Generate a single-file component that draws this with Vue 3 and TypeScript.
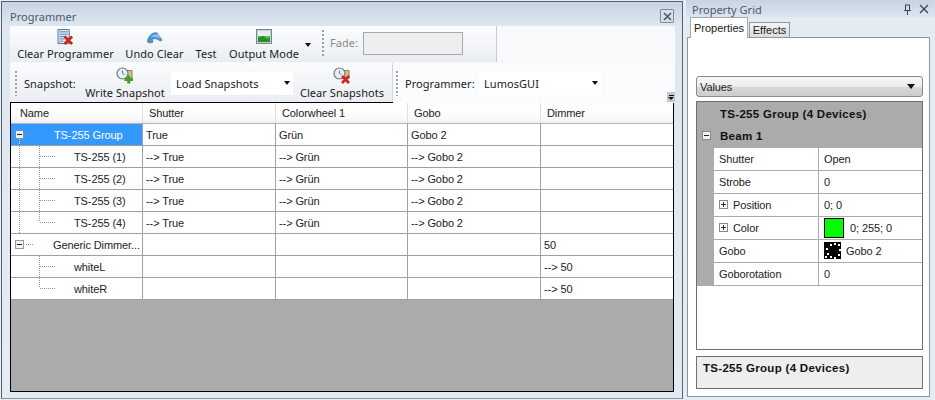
<script setup lang="ts">
interface Row { name: string; kind: 'group' | 'child' | 'last' | 'dim' | 'dimchild' | 'dimlast'; sel?: boolean; cells: string[] }
const columns = ['Name', 'Shutter', 'Colorwheel 1', 'Gobo', 'Dimmer']
const rows: Row[] = [
  { name: 'TS-255 Group', kind: 'group', sel: true, cells: ['True', 'Grün', 'Gobo 2', ''] },
  { name: 'TS-255 (1)', kind: 'child', cells: ['--> True', '--> Grün', '--> Gobo 2', ''] },
  { name: 'TS-255 (2)', kind: 'child', cells: ['--> True', '--> Grün', '--> Gobo 2', ''] },
  { name: 'TS-255 (3)', kind: 'child', cells: ['--> True', '--> Grün', '--> Gobo 2', ''] },
  { name: 'TS-255 (4)', kind: 'last', cells: ['--> True', '--> Grün', '--> Gobo 2', ''] },
  { name: 'Generic Dimmer...', kind: 'dim', cells: ['', '', '', '50'] },
  { name: 'whiteL', kind: 'dimchild', cells: ['', '', '', '--> 50'] },
  { name: 'whiteR', kind: 'dimlast', cells: ['', '', '', '--> 50'] }
]
const isTop = (r: Row) => r.kind === 'group' || r.kind === 'dim'
const goboDots = [[2, 6], [6, 2], [10, 1], [14, 2], [3, 11], [1, 14], [6, 14], [10, 15], [14, 12], [15, 7]]
</script>

<template>
  <div class="screen">
    <section class="programmer">
      <header class="win-title">
        <span>Programmer</span>
        <span class="close-box">
          <svg width="9" height="9" viewBox="0 0 9 9"><path d="M1 1l7 7M8 1L1 8" stroke="#4a5560" stroke-width="1.6" /></svg>
        </span>
      </header>
      <div class="toolbars">
        <div class="strip one">
          <button class="tool clear-prog">
            <svg width="17" height="17" viewBox="0 0 17 17">
              <path d="M.5 .5h12v15H.5z" fill="#d8e4f0" stroke="#4f6f8f" />
              <path d="M2 3h9M2 5.500h9M2 8h6M2 10.500h5M2 13h4" stroke="#5f86ad" />
              <path d="M7.500 8l8 8M15.500 8l-8 8" stroke="#c8261f" stroke-width="3" />
            </svg>
            <span>Clear Programmer</span>
          </button>
          <button class="tool undo">
            <svg width="18" height="17" viewBox="0 0 18 17">
              <path d="M1 14C1 8 6 3 11 4l5 7c1 2-1 2-3 1-2-2-5-2-7-1l1 3-3 1z" fill="#4f94cf" stroke="#2f6ca6" stroke-width=".6" />
              <path d="M5 8c3-2 6-3 8-2l2 4c-3-1-6-2-10-1z" fill="#8cc0e8" />
            </svg>
            <span>Undo Clear</span>
          </button>
          <button class="tool test"><span class="icon-gap"></span><span>Test</span></button>
          <button class="tool output">
            <svg width="16" height="16" viewBox="0 0 16 16">
              <rect x=".5" y=".5" width="15" height="14" fill="#c6ced4" stroke="#7a8790" />
              <rect x="2" y="2" width="12" height="5" fill="#e2f0ee" />
              <rect x="2" y="7" width="12" height="6" fill="#58b84c" />
              <path d="M2 9l5-2 4 3 3-1v4H2z" fill="#2f8a2a" />
            </svg>
            <span>Output Mode</span>
          </button>
          <i class="arrow output-arrow"></i>
          <i class="grip small"></i>
          <label class="fade-label">Fade:</label>
          <span class="fade-input"></span>
        </div>
        <div class="second-line">
          <div class="strip two">
            <i class="grip"></i>
            <label class="lbl snap">Snapshot:</label>
            <button class="tool write">
              <svg width="18" height="17" viewBox="0 0 18 17">
                <path d="M7 3.500h9v8H7z" fill="#d9c48f" stroke="#8d7d52" />
                <circle cx="6.500" cy="6.500" r="5.500" fill="#e8eef2" stroke="#6c7a80" stroke-width="1.200" />
                <path d="M6.500 3.500v3l2 1" stroke="#6c7a80" fill="none" />
                <path d="M8.500 12.500h8.500M12.750 8.500v8" stroke="#3f9f2f" stroke-width="3" />
              </svg>
              <span>Write Snapshot</span>
            </button>
            <div class="combo load"><span>Load Snapshots</span><i class="arrow"></i></div>
            <button class="tool clear-snap">
              <svg width="18" height="17" viewBox="0 0 18 17">
                <path d="M7 3.500h9v8H7z" fill="#d9c48f" stroke="#8d7d52" />
                <circle cx="6.500" cy="6.500" r="5.500" fill="#e8eef2" stroke="#6c7a80" stroke-width="1.200" />
                <path d="M6.500 3.500v3l2 1" stroke="#6c7a80" fill="none" />
                <path d="M9 9l7 7M16 9l-7 7" stroke="#c8261f" stroke-width="2.800" />
              </svg>
              <span>Clear Snapshots</span>
            </button>
          </div>
          <div class="strip three">
            <i class="grip"></i>
            <label class="lbl prog">Programmer:</label>
            <div class="combo lumos"><span>LumosGUI</span><i class="arrow"></i></div>
            <span class="overflow"><i class="bar"></i><i class="arrow mini"></i></span>
          </div>
        </div>
      </div>
      <div class="grid">
        <div class="grid-row head">
          <div v-for="c in columns" :key="c" class="cell">{{ c }}</div>
        </div>
        <div v-for="r in rows" :key="r.name" class="grid-row body">
          <div class="cell name" :class="{ sel: r.sel }">
            <svg v-if="isTop(r)" class="tree" width="43" height="21" viewBox="0 0 43 21">
              <path d="M15 10.500H22" stroke="#999" stroke-dasharray="1 1" />
              <rect x="4.500" y="6.500" width="8" height="8" :fill="r.sel ? '#eaf2fb' : '#f3f3f3'" :stroke="r.sel ? '#7f8f9f' : '#999'" />
              <path d="M6 10.500h5" stroke="#222" />
              <path v-if="r.kind === 'group'" d="M8.500 15V21" stroke="#dde" stroke-dasharray="1 1" />
            </svg>
            <svg v-else class="tree" width="63" height="21" viewBox="0 0 63 21">
              <path v-if="r.kind === 'child' || r.kind === 'last'" d="M8.500 0V21" stroke="#999" stroke-dasharray="1 1" />
              <path :d="r.kind === 'last' || r.kind === 'dimlast' ? 'M28.500 0V10' : 'M28.500 0V21'" stroke="#999" fill="none" stroke-dasharray="1 1" />
              <path d="M29 10.500H44" stroke="#999" stroke-dasharray="1 1" />
            </svg>
            <span :class="{ 'dim-name': r.kind === 'dim' }">{{ r.name }}</span>
          </div>
          <div v-for="(v, i) in r.cells" :key="i" class="cell">{{ v }}</div>
        </div>
      </div>
    </section>

    <aside class="pane">
      <header class="pane-title">
        <span>Property Grid</span>
        <span class="pane-icons">
          <svg width="9" height="11" viewBox="0 0 9 11"><path d="M2.500 1v5M6.500 1v5M1 6.500h7M4.500 7v4M2 1h5" stroke="#3d4650" fill="none" /></svg>
          <svg width="10" height="10" viewBox="0 0 10 10"><path d="M1 1l8 8M9 1L1 9" stroke="#3d4650" stroke-width="1.300" /></svg>
        </span>
      </header>
      <div class="tabs">
        <span class="tab active">Properties</span>
        <span class="tab">Effects</span>
      </div>
      <div class="panel">
        <div class="values"><span>Values</span><i class="arrow big"></i></div>
        <div class="pg">
          <div class="pg-head">TS-255 Group (4 Devices)</div>
          <div class="pg-cat">
            <span class="box minus"></span>
            <span>Beam 1</span>
          </div>
          <div class="pg-rows">
            <div class="pg-row"><div class="k">Shutter</div><div class="v">Open</div></div>
            <div class="pg-row"><div class="k">Strobe</div><div class="v">0</div></div>
            <div class="pg-row"><div class="k exp"><span class="box plus"></span>Position</div><div class="v">0; 0</div></div>
            <div class="pg-row"><div class="k exp"><span class="box plus"></span>Color</div><div class="v"><span class="swatch"></span>0; 255; 0</div></div>
            <div class="pg-row"><div class="k">Gobo</div><div class="v">
              <svg class="gobo" width="17" height="17" viewBox="0 0 17 17">
                <rect width="17" height="17" fill="#000" />
                <rect v-for="(d, i) in goboDots" :key="i" :x="d[0]" :y="d[1]" width="2" height="2" fill="#fff" />
              </svg>Gobo 2</div></div>
            <div class="pg-row"><div class="k">Goborotation</div><div class="v">0</div></div>
          </div>
        </div>
        <div class="help">TS-255 Group (4 Devices)</div>
      </div>
    </aside>
  </div>
</template>

<style scoped>
.screen {
  width: 935px;
  height: 400px;
  display: flex;
  overflow: hidden;
  background: #e6edf5;
  font-family: "Noto Sans", sans-serif;
  color: #1a1a1a;
  box-sizing: border-box;
}
.programmer {
  width: 682px;
  height: 398px;
  margin: 1px 0 0 1px;
  border: 1px solid #5a6068;
  border-bottom-color: #8a939c;
  box-sizing: border-box;
  background: linear-gradient(#c6d4e3 0, #dfe8f2 26px, #e3ebf4 100%);
  display: flex;
  flex-direction: column;
  padding: 0 8px 6px 8px;
}
.win-title {
  height: 24px;
  display: flex;
  align-items: center;
  justify-content: space-between;
  font-size: 11px;
  color: #4c5a66;
  padding-top: 4px;
  box-sizing: border-box;
}
.close-box {
  width: 12px;
  height: 12px;
  border: 1px solid #7d8b98;
  background: #d6e0ea;
  border-radius: 1px;
  display: flex;
  align-items: center;
  justify-content: center;
}
.toolbars {
  height: 76px;
  background: #f7f9fb;
  margin-right: -1px;
  font-size: 11px;
  letter-spacing: 0.05px;
}
.strip { display: flex; align-items: stretch; }
.strip.one {
  width: 487px;
  height: 36px;
  background: linear-gradient(#fcfdfe, #e9edf2);
  border-right: 1px solid #c6ccd2;
  box-sizing: border-box;
}
.second-line { display: flex; height: 40px; margin-top: 1px; }
.strip.two {
  width: 383px;
  background: linear-gradient(#fbfcfd, #e9edf2);
  border-right: 1px solid #d2d7dc;
  box-sizing: border-box;
  align-items: center;
}
.strip.three {
  flex: 1;
  background: #fafbfc;
  align-items: center;
  position: relative;
}
.tool {
  border: 0;
  background: none;
  padding: 0;
  font: inherit;
  letter-spacing: inherit;
  color: #1a1a1a;
  display: flex;
  flex-direction: column;
  align-items: center;
  line-height: 16px;
  white-space: nowrap;
}
.one .tool { padding-top: 3px; height: 36px; box-sizing: border-box; }
.one .tool svg, .icon-gap { height: 16px; margin-bottom: 0; }
.icon-gap { display: block; }
.clear-prog { margin-left: 7px; width: 97px; }
.undo { margin-left: 11px; width: 59px; }
.test { margin-left: 11px; width: 22px; }
.output { margin-left: 11px; width: 72px; }
.one .tool span:last-child { margin-top: 1px; }
.arrow {
  display: block;
  width: 0;
  height: 0;
  border-left: 3.500px solid transparent;
  border-right: 3.500px solid transparent;
  border-top: 4px solid #111;
}
.output-arrow { margin: 17px 0 0 5px; align-self: flex-start; }
.grip {
  display: block;
  width: 2px;
  height: 25px;
  margin-left: 5px;
  background: repeating-linear-gradient(#9aa3ac 0 2px, transparent 2px 4px);
}
.grip.small { margin: 4px 0 0 11px; height: 26px; }
.fade-label { margin: 8px 0 0 6px; color: #8a8a8a; line-height: 18px; width: 33px; }
.fade-input {
  width: 100px;
  height: 23px;
  margin-top: 6px;
  background: #eeeeee;
  border: 1px solid #a8a8a8;
  box-sizing: border-box;
}
.lbl { white-space: nowrap; }
.snap { margin-left: 7px; width: 61px; }
.write { width: 80px; margin-top: 1px; }
.write span, .clear-snap span { margin-top: 1px; }
.combo {
  height: 23px;
  width: 122px;
  background: #fff;
  display: flex;
  align-items: center;
  justify-content: space-between;
  padding: 0 3px 0 5px;
  box-sizing: border-box;
}
.combo.load { margin-left: 6px; }
.clear-snap { margin-left: 7px; width: 84px; margin-top: 1px; }
.strip.three .grip { margin-left: 3px; }
.prog { margin-left: 7px; width: 74px; }
.overflow {
  position: absolute;
  right: 0;
  bottom: 1px;
  width: 8px;
  height: 10px;
  background: #c4c9ce;
  display: flex;
  flex-direction: column;
  align-items: center;
  justify-content: center;
  gap: 1px;
}
.bar { display: block; width: 5px; height: 1px; background: #111; }
.mini { border-left-width: 3px; border-right-width: 3px; border-top-width: 3px; }
.grid {
  height: 290px;
  width: 664px;
  border: 1px solid #000;
  box-sizing: border-box;
  background: #ababab;
  font-family: "Liberation Sans", sans-serif;
  font-size: 11px;
  letter-spacing: -0.1px;
  margin-right: -1px;
  overflow: hidden;
}
.grid-row {
  display: grid;
  grid-template-columns: 132px 133px 132px 133px 132px;
  height: 22px;
  background: #fff;
  border-bottom: 1px solid #a0a0a0;
  box-sizing: border-box;
}
.head {
  height: 21px;
  background: linear-gradient(#fff, #fbfbfb 70%, #f0f0f0);
  border-bottom: 1px solid #b5b5b5;
}
.head .cell { padding-left: 6px; border-right-color: #e0e0e0; }
.head .cell:first-child { padding-left: 9px; }
.cell {
  display: flex;
  align-items: center;
  padding-left: 3px;
  border-right: 1px solid #a0a0a0;
  box-sizing: border-box;
  white-space: nowrap;
  overflow: hidden;
  color: #222;
}
.cell:last-child { border-right: 0; }
.cell.name { padding-left: 0; }
.cell.sel { background: #3399ff; color: #fff; }
.tree { flex: none; }
.dim-name { margin-left: -1px; }
.pane {
  flex: 1;
  margin-left: 3px;
  display: flex;
  flex-direction: column;
  background: #e4ebf3;
  min-width: 0;
}
.pane-title {
  height: 17px;
  display: flex;
  justify-content: space-between;
  align-items: center;
  padding: 1px 6px 0 6px;
  box-sizing: border-box;
  font-size: 11px;
  color: #4c5a66;
  background: linear-gradient(#c6d4e3, #dbe5ef);
}
.pane-icons { display: flex; gap: 7px; align-items: center; }
.tabs {
  display: flex;
  align-items: flex-end;
  height: 20px;
  padding-left: 4px;
  font-family: "Liberation Sans", sans-serif;
  font-size: 11px;
  position: relative;
  z-index: 1;
}
.tab {
  height: 15px;
  width: 41px;
  margin-left: 1px;
  border: 1px solid #909aa3;
  border-bottom: 0;
  background: linear-gradient(#f5f5f5, #dcdcdc);
  text-align: center;
  line-height: 15px;
  box-sizing: border-box;
}
.tab.active {
  height: 21px;
  width: 58px;
  margin-left: 0;
  background: #fff;
  line-height: 20px;
  border-color: #a0a8b0;
  margin-bottom: -1px;
}
.panel {
  width: 243px;
  height: 360px;
  margin-left: 1px;
  box-sizing: border-box;
  border: 1px solid #8d969e;
  background: #fff;
  padding: 38px 6px 0 8px;
  font-family: "Liberation Sans", sans-serif;
  font-size: 11px;
  letter-spacing: -0.1px;
  color: #222;
}
.values {
  height: 21px;
  border: 1px solid #8a8a8a;
  border-radius: 3px;
  background: linear-gradient(#f6f6f6 0, #ededed 50%, #d8d8d8 52%, #ccc 100%);
  display: flex;
  align-items: center;
  justify-content: space-between;
  padding: 0 7px 0 3px;
  box-sizing: border-box;
}
.big { border-left-width: 4px; border-right-width: 4px; border-top-width: 5px; }
.pg {
  height: 249px;
  margin-top: 4px;
  border: 1px solid #6f6f6f;
  box-sizing: border-box;
  background: #fff;
}
.pg-head {
  height: 24px;
  background: #ababab;
  font-weight: 700;
  font-size: 11.500px;
  letter-spacing: 0.3px;
  padding-left: 23px;
  line-height: 24px;
  color: #111;
}
.pg-cat {
  height: 22px;
  background: #ababab;
  font-weight: 700;
  font-size: 11.500px;
  letter-spacing: 0.3px;
  display: flex;
  align-items: center;
  padding: 0 0 3px 5px;
  box-sizing: border-box;
  gap: 9px;
  color: #111;
}
.box {
  display: block;
  width: 9px;
  height: 9px;
  border: 1px solid #8a8a8a;
  background:
    linear-gradient(#222, #222) center / 5px 1px no-repeat,
    #f4f4f4;
  box-sizing: border-box;
  flex: none;
}
.box.plus {
  background:
    linear-gradient(#333, #333) center / 5px 1px no-repeat,
    linear-gradient(#333, #333) center / 1px 5px no-repeat,
    #fff;
  margin-right: 5px;
}
.pg-rows { border-left: 17px solid #ababab; }
.pg-row {
  display: grid;
  grid-template-columns: 105px 1fr;
  height: 23px;
  border-bottom: 1px solid #ababab;
  box-sizing: border-box;
}
.k, .v { display: flex; align-items: center; padding: 0 0 1px 5px; white-space: nowrap; }
.k { border-right: 1px solid #ababab; }
.swatch {
  width: 20px;
  height: 20px;
  background: #00ff00;
  border: 1px solid #000;
  box-sizing: border-box;
  margin-right: 6px;
}
.gobo { margin-right: 5px; }
.help {
  height: 33px;
  margin-top: 6px;
  border: 1px solid #6f6f6f;
  background: #eeeeee;
  box-sizing: border-box;
  font-weight: 700;
  font-size: 11.500px;
  letter-spacing: 0.3px;
  padding: 2px 6px;
  line-height: 18px;
  color: #111;
}
</style>
